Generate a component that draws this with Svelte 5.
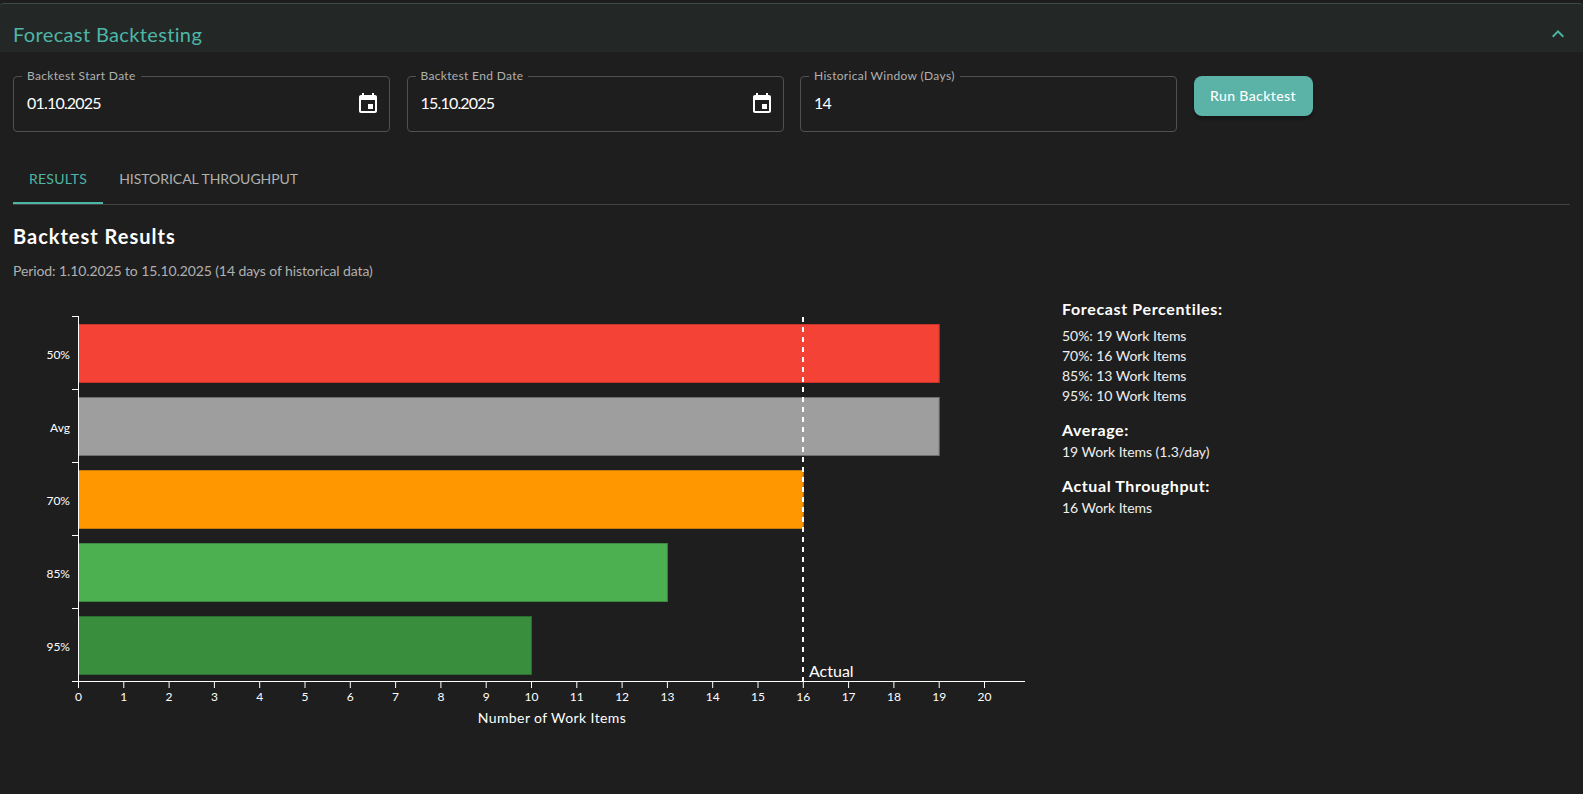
<script>
  const ticks = Array.from({ length: 21 }, (_, i) => i);
  const bars = [
    { label: '50%', value: 19, fill: '#f44336', stroke: '#c8352c' },
    { label: 'Avg', value: 19, fill: '#9e9e9e', stroke: '#6e6e6e' },
    { label: '70%', value: 16, fill: '#ff9800', stroke: '#c77a0a' },
    { label: '85%', value: 13, fill: '#4caf50', stroke: '#3b8a3f' },
    { label: '95%', value: 10, fill: '#388e3c', stroke: '#2b6e2f' }
  ];
  const x = (v) => 78.5 + v * 45.3;
  const bandTop = 316;
  const band = 73;
  const fields = [
    { label: 'Backtest Start Date', value: '01.10.2025', icon: true },
    { label: 'Backtest End Date', value: '15.10.2025', icon: true },
    { label: 'Historical Window (Days)', value: '14', icon: false }
  ];
</script>

<div class="page">
  <header class="head">
    <h2>Forecast Backtesting</h2>
    <svg class="chev" viewBox="0 0 24 24" width="24" height="24"><path d="M12 8l-6 6 1.41 1.41L12 10.83l4.59 4.58L18 14z" /></svg>
  </header>

  <section class="body">
    <div class="form">
      {#each fields as f}
        <div class="field">
          <span class="flabel">{f.label}</span>
          <span class="fvalue">{f.value}</span>
          {#if f.icon}
            <svg class="cal" viewBox="0 0 24 24" width="24" height="24"><path d="M17 12h-5v5h5v-5zM16 1v2H8V1H6v2H5c-1.11 0-1.99.9-1.99 2L3 19c0 1.1.89 2 2 2h14c1.1 0 2-.9 2-2V5c0-1.1-.9-2-2-2h-1V1h-2zm3 18H5V8h14v11z" /></svg>
          {/if}
        </div>
      {/each}
      <button class="run">Run Backtest</button>
    </div>

    <div class="tabs">
      <div class="tab active">Results</div>
      <div class="tab other">Historical Throughput</div>
    </div>

    <h3 class="results">Backtest Results</h3>
    <p class="period">Period: 1.10.2025 to 15.10.2025 (14 days of historical data)</p>

    <div class="resultrow">
      <svg class="chart" width="1049" height="440" viewBox="0 296 1049 440">
        {#each bars as b, i}
          <rect x={x(0)} y={bandTop + band * i + 8.5} width={x(b.value) - x(0)} height="58" fill={b.fill} stroke={b.stroke} stroke-width="1" />
          <text class="tl" x="70" y={bandTop + band * i + 38.5 + 4.5} text-anchor="end">{b.label}</text>
          <line x1="72" x2="78.5" y1={bandTop + band * i + 0.5} y2={bandTop + band * i + 0.5} />
        {/each}
        <line x1="72" x2="78.5" y1="681.5" y2="681.5" />
        <line x1="78.5" x2="78.5" y1="316" y2="682" />
        <line x1="72" x2="1025" y1="681.5" y2="681.5" />
        {#each ticks as t}
          <line x1={x(t)} x2={x(t)} y1="681.5" y2="688" />
          <text class="tl" x={x(t)} y="701" text-anchor="middle">{t}</text>
        {/each}
        <line class="dash" x1="803" x2="803" y1="317" y2="681" />
        <text class="actual" x="809" y="677">Actual</text>
        <text class="axis" x="552" y="723" text-anchor="middle">Number of Work Items</text>
      </svg>

      <aside class="side">
        <h4 class="first">Forecast Percentiles:</h4>
        <p>50%: 19 Work Items</p>
        <p>70%: 16 Work Items</p>
        <p>85%: 13 Work Items</p>
        <p>95%: 10 Work Items</p>
        <h4 class="mid">Average:</h4>
        <p>19 Work Items (1.3/day)</p>
        <h4 class="last">Actual Throughput:</h4>
        <p>16 Work Items</p>
      </aside>
    </div>
  </section>
</div>

<style>
  :global(body) {
    margin: 0;
    background: #1e1e1e;
  }
  .page {
    height: 794px;
    overflow: hidden;
    padding-top: 3px;
    box-sizing: border-box;
    font-family: Lato, "Noto Sans", sans-serif;
    color: #fff;
    background: #1e1e1e;
  }
  .head {
    height: 49px;
    box-sizing: border-box;
    border-top: 1px solid #3f4a47;
    background: #232827;
    border-radius: 4px 4px 0 0;
    display: flex;
    align-items: center;
    justify-content: space-between;
    padding: 11px 13px 0 13px;
  }
  h2 {
    margin: 0;
    font-size: 20px;
    font-weight: 400;
    letter-spacing: 0.36px;
    color: #4db6a6;
  }
  .chev { fill: #4db6a6; }
  .body { padding: 24px 13px 0; }
  .form {
    display: flex;
    gap: 16.5px;
    align-items: flex-start;
  }
  .field {
    position: relative;
    width: 377px;
    height: 56px;
    box-sizing: border-box;
    border: 1px solid #505050;
    border-radius: 4px;
    display: flex;
    align-items: center;
    justify-content: space-between;
    padding: 0 9px 0 13px;
  }
  .flabel {
    position: absolute;
    left: 8px;
    top: -9px;
    padding: 0 5px;
    background: #1e1e1e;
    font-size: 12px;
    line-height: 15px;
    letter-spacing: 0.33px;
    color: #b0b0b0;
  }
  .fvalue {
    font-size: 16px;
    letter-spacing: -0.8px;
    padding-bottom: 4px;
  }
  .cal { fill: #fff; }
  .run {
    height: 40px;
    width: 119px;
    border: 0;
    border-radius: 8px;
    background: #5ab3a6;
    color: #fff;
    font: inherit;
    font-size: 14px;
    font-weight: 500;
    letter-spacing: 0.4px;
    box-shadow: 0 3px 3px rgba(0, 0, 0, 0.3);
    padding: 0 0 2px;
  }
  .tabs {
    margin-top: 24px;
    display: flex;
    height: 49px;
    box-sizing: border-box;
    border-bottom: 1px solid #424242;
  }
  .tab {
    padding: 0 16px;
    height: 48px;
    box-sizing: border-box;
    line-height: 46px;
    font-size: 14px;
    text-transform: uppercase;
    color: #b0b0b0;
  }
  .tab.other { letter-spacing: -0.04px; }
  .tab.active {
    color: #4db6a6;
    letter-spacing: 0.25px;
    border-bottom: 2px solid #4db6a6;
  }
  .results {
    margin: 18px 0 0;
    font-size: 20px;
    line-height: 26px;
    font-weight: 700;
    letter-spacing: 1px;
  }
  .period {
    margin: 12px 0 0;
    font-size: 14px;
    line-height: 20px;
    letter-spacing: -0.1px;
    color: #b0b0b0;
  }
  .resultrow {
    display: flex;
    margin-top: 15px;
    margin-left: -13px;
  }
  .chart { display: block; flex: none; }
  .chart line { stroke: #fff; stroke-width: 1; }
  .chart line.dash { stroke-width: 2; stroke-dasharray: 5 5; }
  .tl { font-size: 12px; fill: #fff; }
  .actual { font-size: 16px; fill: #fff; }
  .axis { font-size: 14px; letter-spacing: 0.4px; fill: #fff; }
  .side { padding: 2px 0 0 13px; }
  .side h4 {
    margin: 0;
    font-size: 16px;
    line-height: 22px;
    font-weight: 700;
  }
  .side h4.first { margin-bottom: 6px; letter-spacing: 0.65px; }
  .side h4.mid { margin-top: 13px; margin-bottom: 1px; letter-spacing: 0.6px; }
  .side h4.last { margin-top: 13px; margin-bottom: 1px; letter-spacing: 0.6px; }
  .side p {
    margin: 0;
    font-size: 14px;
    line-height: 20px;
    letter-spacing: -0.05px;
    color: #eee;
  }
</style>
